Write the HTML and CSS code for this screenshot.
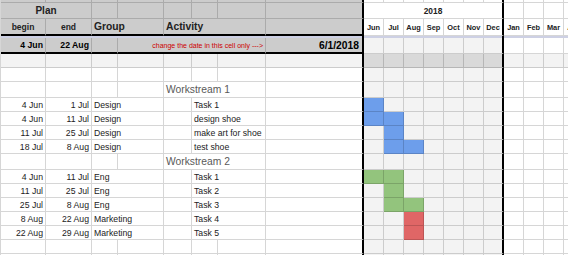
FILE: index.html
```html
<!DOCTYPE html>
<html lang="en">
<head>
    <meta charset="UTF-8">
    <meta name="viewport" content="width=device-width, initial-scale=1.0">
    <title>Plan</title>
    <link rel="stylesheet" href="styles.css">
</head>
<body>
    <div class="sheet" id="sheet">
        <!-- Rows are rendered below -->
    </div>

    <script>
        const MONTHS = ['Jun', 'Jul', 'Aug', 'Sep', 'Oct', 'Nov', 'Dec', 'Jan', 'Feb', 'Mar', 'Apr'];

        const GROUP_COLORS = {
            Design: 'blue',
            Eng: 'green',
            Marketing: 'red'
        };

        // months = column indexes (0 = Jun) that get filled
        const workstreams = [
            {
                name: 'Workstream 1',
                tasks: [
                    { begin: '4 Jun', end: '1 Jul', group: 'Design', activity: 'Task 1', months: [0] },
                    { begin: '4 Jun', end: '11 Jul', group: 'Design', activity: 'design shoe', months: [0, 1] },
                    { begin: '11 Jul', end: '25 Jul', group: 'Design', activity: 'make art for shoe', months: [1] },
                    { begin: '18 Jul', end: '8 Aug', group: 'Design', activity: 'test shoe', months: [1, 2] }
                ]
            },
            {
                name: 'Workstream 2',
                tasks: [
                    { begin: '4 Jun', end: '11 Jul', group: 'Eng', activity: 'Task 1', months: [0, 1] },
                    { begin: '11 Jul', end: '25 Jul', group: 'Eng', activity: 'Task 2', months: [1] },
                    { begin: '25 Jul', end: '8 Aug', group: 'Eng', activity: 'Task 3', months: [1, 2] },
                    { begin: '8 Aug', end: '22 Aug', group: 'Marketing', activity: 'Task 4', months: [2] },
                    { begin: '22 Aug', end: '29 Aug', group: 'Marketing', activity: 'Task 5', months: [2] }
                ]
            }
        ];

        function cell(cls, text = '') {
            return `<div class="cell ${cls}">${text}</div>`;
        }

        function blankLeft(extra = '') {
            return ['', '', '', '', '', '', '', 'split'].map(c => cell(`${c} ${extra}`)).join('');
        }

        function ganttCells({ inside = '', outside = '', bars = [], color = '' } = {}) {
            return MONTHS.map((m, i) => {
                let cls = i === 6 ? 'year-end' : '';
                if (bars.includes(i)) {
                    cls += ' ' + color;
                } else {
                    cls += ' ' + (i < 7 ? inside : outside);
                }
                return cell(cls);
            }).join('');
        }

        function row(cls, content) {
            return `<div class="row ${cls}">${content}</div>`;
        }

        function renderSheet() {
            let html = '';

            html += row('row-top', blankLeft('hd') + ganttCells());

            html += row('row-title',
                cell('hd span2 center plan', 'Plan') +
                cell('hd') + cell('hd') + cell('hd') + cell('hd') + cell('hd') + cell('hd split') +
                cell('span7 center year year-end', '2018') +
                cell('') + cell('') + cell('') + cell('')
            );

            html += row('row-head',
                cell('hd thick center label', 'begin') +
                cell('hd thick center label', 'end') +
                cell('hd thick span2 col-title', 'Group') +
                cell('hd thick span3 col-title', 'Activity') +
                cell('hd thick split') +
                MONTHS.map((m, i) => cell(`center month ${i === 6 ? 'year-end' : ''}`, m)).join('')
            );

            html += row('row-band band', blankLeft() + ganttCells());

            html += row('row-date',
                cell('hd thick right date-bold', '4 Jun') +
                cell('hd thick right date-bold', '22 Aug') +
                cell('hd thick') +
                cell('hd thick span4 right note', 'change the date in this cell only ---&gt;') +
                cell('hd thick split right start-date', '6/1/2018') +
                ganttCells({ inside: 'in' })
            );

            html += row('row-small', blankLeft('light') + ganttCells({ inside: 'dark', outside: 'light' }));
            html += row('row-small', blankLeft() + ganttCells({ inside: 'in' }));

            workstreams.forEach(ws => {
                html += row('row-ws',
                    cell('') + cell('') + cell('') + cell('') +
                    cell('span3 ws', ws.name) +
                    cell('split') +
                    ganttCells({ inside: 'in' })
                );

                ws.tasks.forEach(task => {
                    html += row('row-small',
                        cell('right', task.begin) +
                        cell('right', task.end) +
                        cell('span2', task.group) +
                        cell('') +
                        cell('span2', task.activity) +
                        cell('split') +
                        ganttCells({ inside: 'in', bars: task.months, color: GROUP_COLORS[task.group] })
                    );
                });
            });

            html += row('row-small', blankLeft() + ganttCells({ inside: 'in' }));
            html += row('row-small', blankLeft() + ganttCells({ inside: 'in' }));

            document.getElementById('sheet').innerHTML = html;
        }

        renderSheet();
    </script>
</body>
</html>
```

FILE: styles.css
```css
* {
    margin: 0;
    padding: 0;
    box-sizing: border-box;
}

body {
    font-family: "Liberation Sans", Arial, sans-serif;
    color: #222;
    background-color: #fff;
    overflow: hidden;
}

.sheet {
    width: 584px;
    border-left: 1px solid #d6d6d6;
}

.row {
    display: grid;
    grid-template-columns: 45px 46px 26px 46px 28px 26px 48px 98px repeat(11, 20px);
}

.row-top { height: 3px; }
.row-title { height: 16px; }
.row-head { height: 17px; }
.row-band { height: 2px; }
.row-date { height: 16px; }
.row-small { height: 14px; }
.row-ws { height: 16px; }

.cell {
    display: flex;
    align-items: center;
    min-width: 0;
    padding: 0 2px;
    border-right: 1px solid rgba(0, 0, 0, 0.16);
    border-bottom: 1px solid rgba(0, 0, 0, 0.16);
    font-size: 8.7px;
    white-space: nowrap;
    overflow: hidden;
}

.span2 { grid-column: span 2; }
.span3 { grid-column: span 3; }
.span4 { grid-column: span 4; }
.span7 { grid-column: span 7; }

.right { justify-content: flex-end; }
.center { justify-content: center; }

.hd { background-color: #cccccc; }
.thick { border-bottom: 2px solid #000; }
.split,
.year-end { border-right: 2px solid #000; }

.plan {
    font-size: 10px;
    font-weight: bold;
}

.label {
    font-size: 8.5px;
    font-weight: bold;
}

.col-title {
    font-size: 10.3px;
    font-weight: bold;
}

.date-bold {
    font-weight: bold;
    color: #000;
}

.note {
    font-size: 7px;
    color: #cc0000;
}

.start-date {
    font-size: 10.3px;
    font-weight: bold;
    color: #000;
    padding-right: 3px;
}

.year {
    font-size: 8.4px;
    font-weight: bold;
}

.month {
    padding: 0;
    font-size: 7.4px;
    font-weight: bold;
}

.ws {
    font-size: 10.3px;
    color: #595959;
}

.in,
.light { background-color: #f3f3f3; }
.dark { background-color: #d9d9d9; }

.band .cell {
    background-color: #cdd0e4;
    border-bottom: 0;
    border-right-color: transparent;
}

.band .cell.split,
.band .cell.year-end { border-right-color: #000; }

.blue { background-color: #6d9eeb; }
.green { background-color: #93c47d; }
.red { background-color: #e06666; }
```
